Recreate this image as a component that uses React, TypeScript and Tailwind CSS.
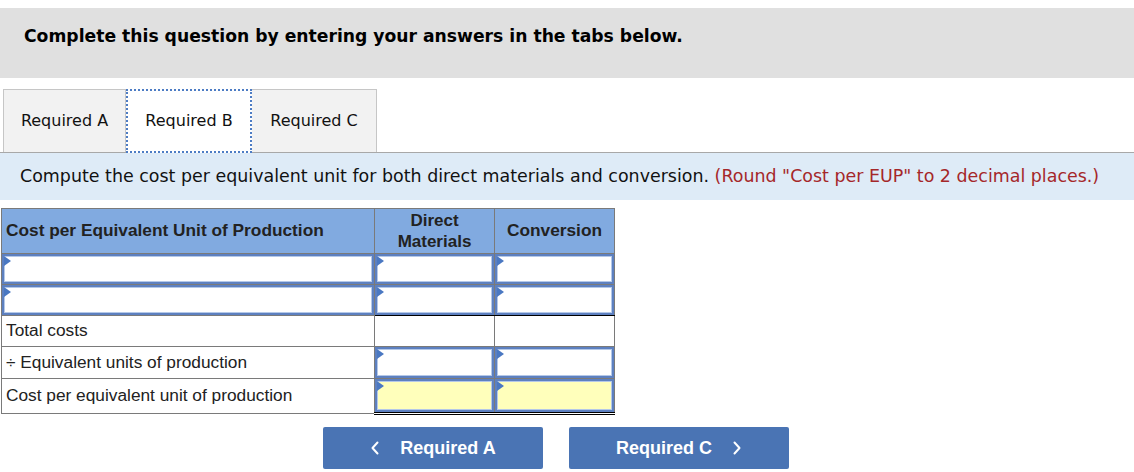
import React from 'react';

const verdana = { fontFamily: '"DejaVu Sans", Verdana, sans-serif' };

// small blue marker at top-left of each input cell
const Marker = () => (
  <svg className="absolute left-0 top-0" width="7" height="11" viewBox="0 0 7 11">
    <path d="M0 0 L7 5 L0 10 Z" fill="#4a78c2" />
  </svg>
);

const InputCell = ({ yellow = false }: { yellow?: boolean }) => (
  <div
    className={`relative h-full w-full border-2 border-[#5d80c0] shadow-[inset_0_0_0_1px_#b4c8e8] ${
      yellow ? 'bg-[#ffffbb]' : 'bg-white'
    }`}
  >
    <Marker />
  </div>
);

const ChevronLeft = () => (
  <svg width="10" height="14" viewBox="0 0 10 14" fill="none">
    <path d="M7.5 1.5 L2.5 7 L7.5 12.5" stroke="white" strokeWidth="2" strokeLinecap="round" strokeLinejoin="round" />
  </svg>
);

const ChevronRight = () => (
  <svg width="10" height="14" viewBox="0 0 10 14" fill="none">
    <path d="M2.5 1.5 L7.5 7 L2.5 12.5" stroke="white" strokeWidth="2" strokeLinecap="round" strokeLinejoin="round" />
  </svg>
);

export default function App() {
  return (
    <div className="w-[1134px] h-[472px] bg-white overflow-hidden pt-[8px]">
      {/* Banner */}
      <div className="h-[70px] bg-[#e0e0e0] pl-[24px] pt-[17px]" style={verdana}>
        <span className="text-[17.2px] leading-[22px] font-bold text-black">
          Complete this question by entering your answers in the tabs below.
        </span>
      </div>

      {/* Tabs */}
      <div className="mt-[11px] flex pl-[3px] h-[63px]" style={verdana}>
        <div className="w-[123px] h-full bg-[#f2f2f2] border border-b-0 border-[#c6c6c6] flex items-center justify-center text-[16px] text-[#111]">
          Required A
        </div>
        <div className="w-[126px] h-[64px] bg-white border-2 border-dotted border-[#4d7cc4] flex items-center justify-center text-[16px] text-[#111] relative z-10">
          Required B
        </div>
        <div className="w-[125px] h-full bg-[#f2f2f2] border border-b-0 border-l-0 border-[#c6c6c6] flex items-center justify-center text-[16px] text-[#111]">
          Required C
        </div>
      </div>

      {/* Instruction */}
      <div className="h-[48px] border-t border-[#a8a8a8] bg-[#deebf7] flex items-center pl-[20px] text-[17.45px]" style={verdana}>
        <span className="text-[#111]">
          Compute the cost per equivalent unit for both direct materials and conversion.{' '}
          <span className="text-[#a5272a]">(Round "Cost per EUP" to 2 decimal places.)</span>
        </span>
      </div>

      {/* Table */}
      <div className="mt-[8px] ml-[1px]" style={{ fontFamily: '"Liberation Sans", Arial, sans-serif' }}>
        <table className="border-collapse table-fixed text-[17.3px] text-[#222]">
          <colgroup>
            <col className="w-[373px]" />
            <col className="w-[120px]" />
            <col className="w-[120px]" />
          </colgroup>
          <tbody>
            <tr className="h-[45px] bg-[#81aae0]">
              <th className="border border-[#7a7a7a] text-left font-bold pl-[4px]">Cost per Equivalent Unit of Production</th>
              <th className="border border-[#7a7a7a] font-bold leading-[21px] text-[17px]">
                Direct
                <br />
                Materials
              </th>
              <th className="border border-[#7a7a7a] font-bold text-[17.3px]">Conversion</th>
            </tr>
            <tr className="h-[31px]">
              <td className="border border-[#7a7a7a] p-0 h-[31px]"><InputCell /></td>
              <td className="border border-[#7a7a7a] p-0 h-[31px]"><InputCell /></td>
              <td className="border border-[#7a7a7a] p-0 h-[31px]"><InputCell /></td>
            </tr>
            <tr className="h-[31px]">
              <td className="border border-[#7a7a7a] p-0 h-[31px]"><InputCell /></td>
              <td className="border border-[#7a7a7a] border-b-black p-0 h-[31px]"><InputCell /></td>
              <td className="border border-[#7a7a7a] border-b-black p-0 h-[31px]"><InputCell /></td>
            </tr>
            <tr className="h-[31px]">
              <td className="border border-[#7a7a7a] pl-[4px]">Total costs</td>
              <td className="border border-[#7a7a7a]"></td>
              <td className="border border-[#7a7a7a]"></td>
            </tr>
            <tr className="h-[32px]">
              <td className="border border-[#7a7a7a] pl-[4px]">÷ Equivalent units of production</td>
              <td className="border border-[#7a7a7a] p-0 h-[32px]"><InputCell /></td>
              <td className="border border-[#7a7a7a] p-0 h-[32px]"><InputCell /></td>
            </tr>
            <tr className="h-[35px]">
              <td className="border border-[#7a7a7a] pl-[4px]">Cost per equivalent unit of production</td>
              <td className="border border-[#7a7a7a] border-b-[3px] border-b-black border-double p-0 h-[35px]"><InputCell yellow /></td>
              <td className="border border-[#7a7a7a] border-b-[3px] border-b-black border-double p-0 h-[35px]"><InputCell yellow /></td>
            </tr>
          </tbody>
        </table>

        {/* Navigation buttons */}
        <div className="mt-[12px] flex gap-[26px] pl-[322px]">
          <button className="w-[220px] h-[42px] rounded-[2px] bg-[#4a74b4] text-white font-bold text-[18px] flex items-center justify-center gap-[20px]">
            <ChevronLeft />
            <span>Required A</span>
          </button>
          <button className="w-[220px] h-[42px] rounded-[2px] bg-[#4a74b4] text-white font-bold text-[18px] flex items-center justify-center gap-[20px]">
            <span>Required C</span>
            <ChevronRight />
          </button>
        </div>
      </div>
    </div>
  );
}
